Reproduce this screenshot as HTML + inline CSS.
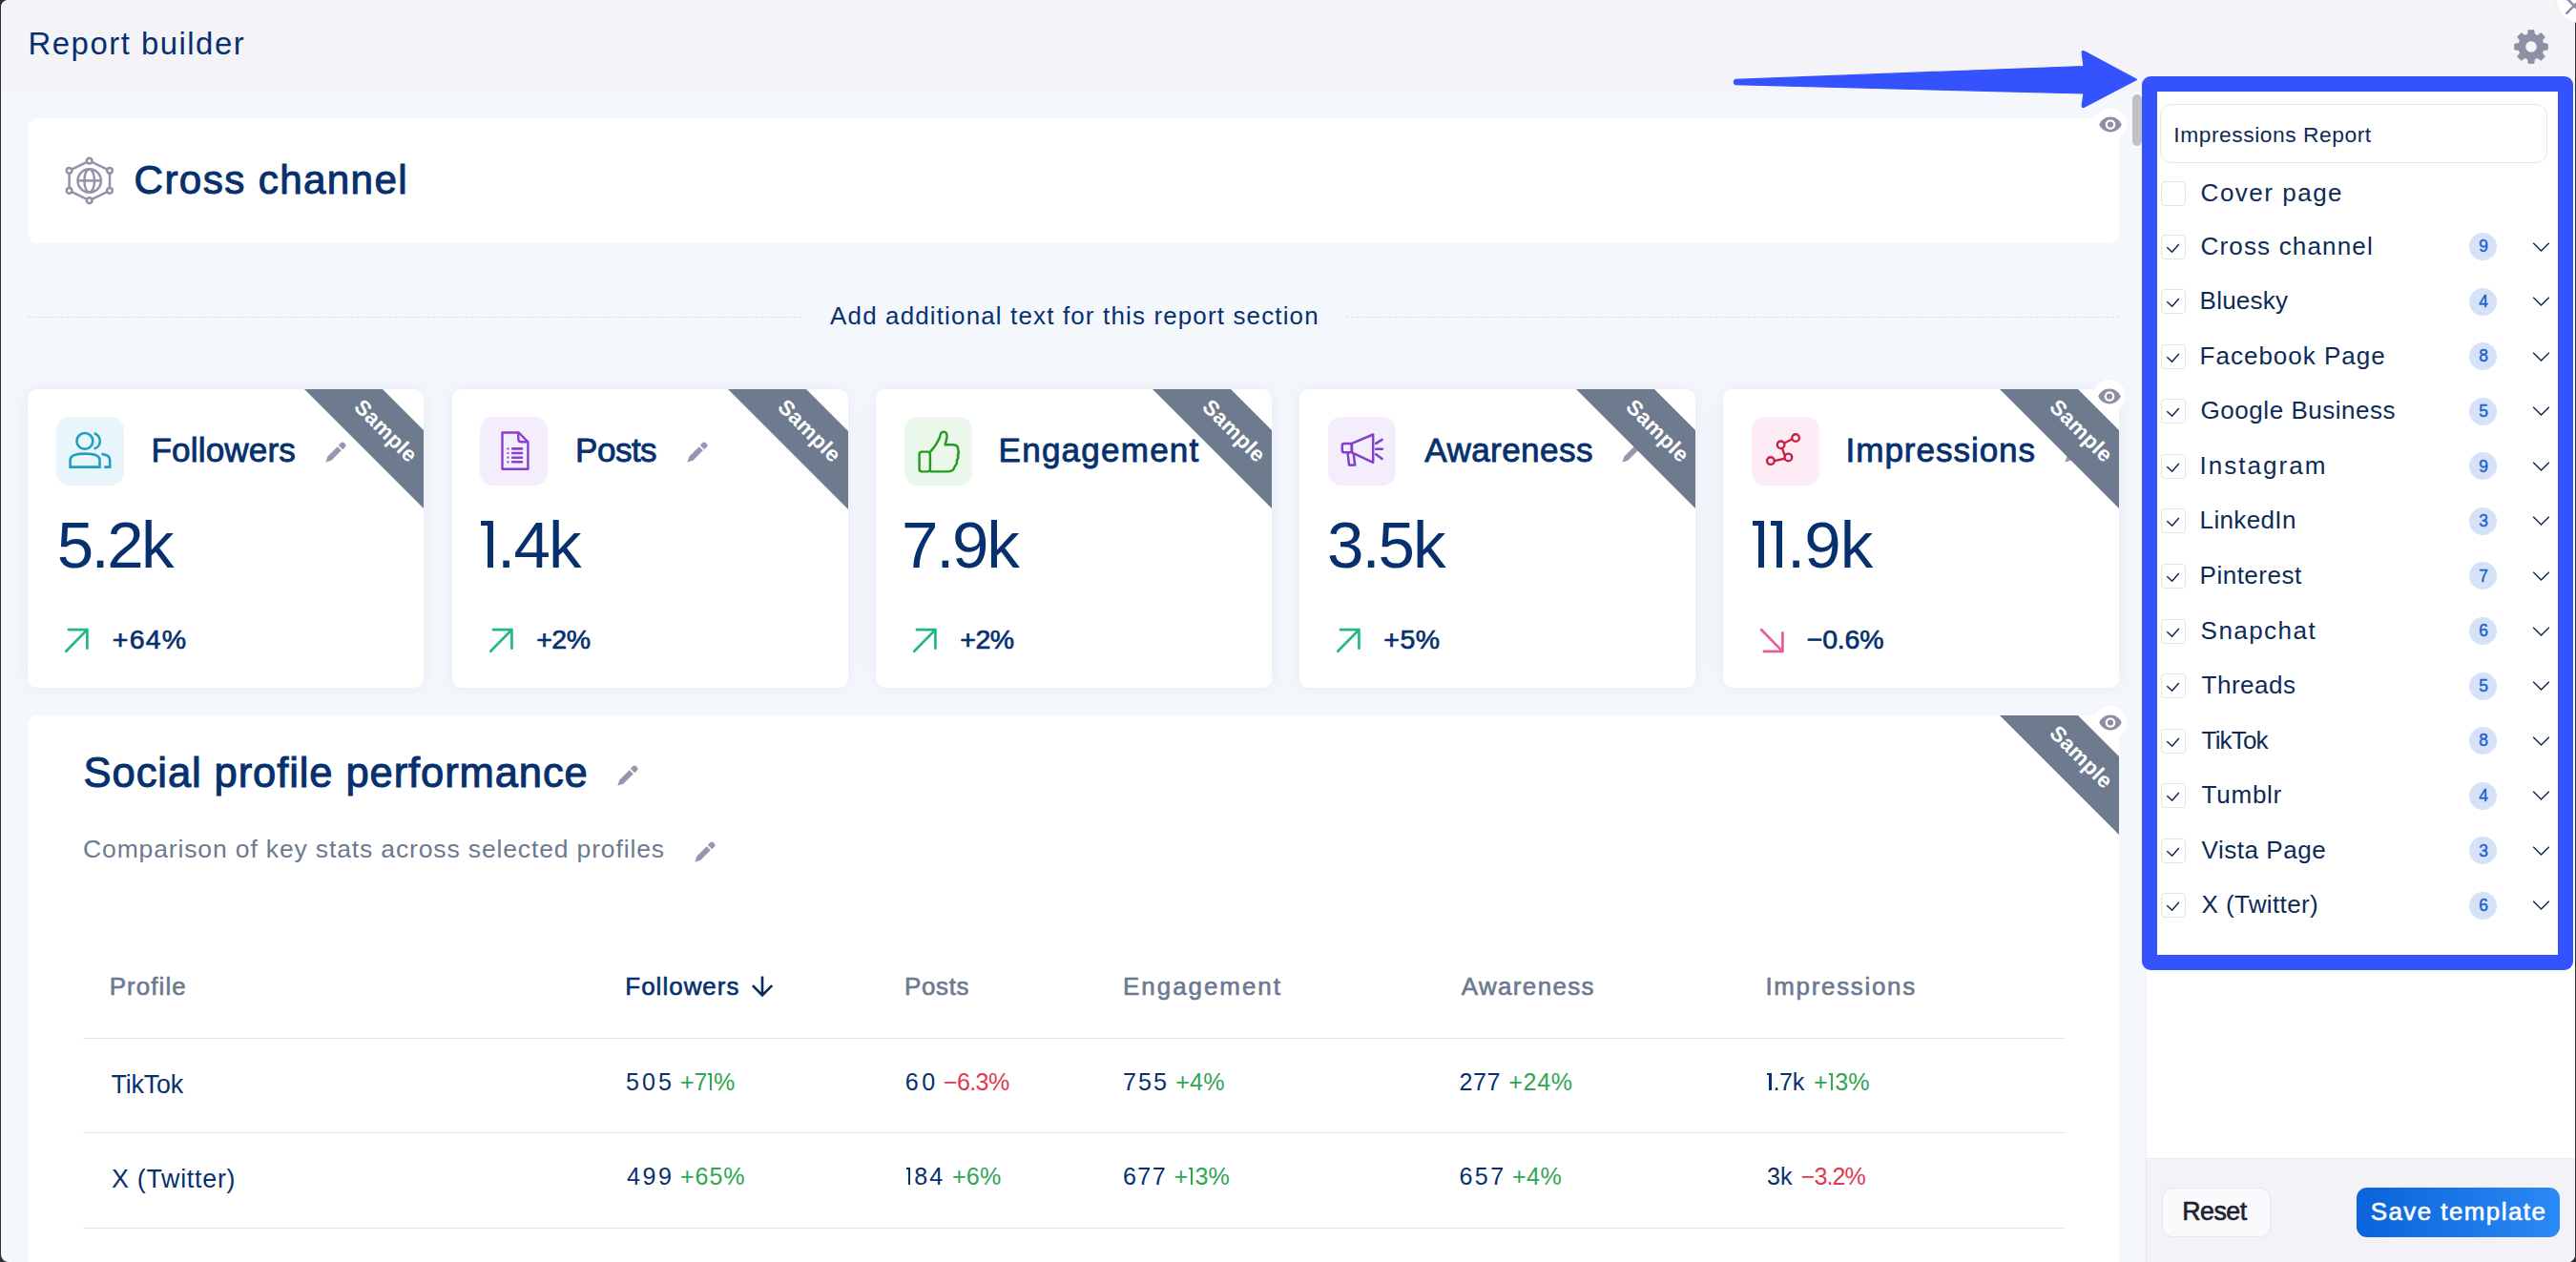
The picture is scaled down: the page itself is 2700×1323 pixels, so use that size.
<!DOCTYPE html>
<html><head><meta charset="utf-8"><title>Report builder</title><style>
html,body{margin:0;padding:0}
body{width:2700px;height:1323px;overflow:hidden;position:relative;background:#2e3136;font-family:'Liberation Sans', sans-serif}
</style></head><body>
<div style="position:absolute;left:1px;top:0;width:2698px;height:1323px;border-radius:8px;background:#f4f7fc;overflow:hidden"><div style="position:absolute;left:0;top:0;width:2698px;height:95px;background:#f4f3f8"></div></div>
<svg style="position:absolute;left:2635px;top:31px" width="36" height="36" viewBox="0 0 36 36"><path fill="#8e90a5" fill-rule="evenodd" stroke="#8e90a5" stroke-width="0.6" stroke-linejoin="round" d="M14.30 5.12L15.10 0.44L20.90 0.44L21.70 5.12A13.4 13.4 0 0 1 24.49 6.28L28.37 3.53L32.47 7.63L29.72 11.51A13.4 13.4 0 0 1 30.88 14.30L35.56 15.10L35.56 20.90L30.88 21.70A13.4 13.4 0 0 1 29.72 24.49L32.47 28.37L28.37 32.47L24.49 29.72A13.4 13.4 0 0 1 21.70 30.88L20.90 35.56L15.10 35.56L14.30 30.88A13.4 13.4 0 0 1 11.51 29.72L7.63 32.47L3.53 28.37L6.28 24.49A13.4 13.4 0 0 1 5.12 21.70L0.44 20.90L0.44 15.10L5.12 14.30A13.4 13.4 0 0 1 6.28 11.51L3.53 7.63L7.63 3.53L11.51 6.28A13.4 13.4 0 0 1 14.30 5.12ZM24.1 18A6.1 6.1 0 1 0 11.9 18A6.1 6.1 0 1 0 24.1 18Z"/></svg>
<div style="position:absolute;left:2680px;top:-24px;width:48px;height:48px;border-radius:50%;background:#fff;box-shadow:0 0 5px rgba(0,0,0,0.05)"></div>
<svg style="position:absolute;left:2686px;top:-6px" width="24" height="24" viewBox="0 0 24 24"><path d="M4.2 19.8L19.8 4.2M4.2 4.2L19.8 19.8" stroke="#8e8ea8" stroke-width="2.6" stroke-linecap="round"/></svg>
<div style="position:absolute;left:2699px;top:24px;width:1px;height:1299px;background:#2e3136"></div>
<div style="position:absolute;left:29px;top:124px;width:2192px;height:131px;background:#fff;border-radius:12px"></div>
<svg style="position:absolute;left:66px;top:162px" width="56" height="56" viewBox="0 0 56 56"><g fill="none" stroke="#9393a8" stroke-width="2.5">
<path d="M27.7 6.6 L6.6 16.8 M27.7 6.6 L49 16.8 M6.6 16.8 V37.8 M49 16.8 V37.8 M6.6 37.8 L27.7 48.2 M49 37.8 L27.7 48.2" />
<circle cx="27.7" cy="6.6" r="2.9" fill="#fff"/><circle cx="6.6" cy="16.8" r="2.9" fill="#fff"/><circle cx="49" cy="16.8" r="2.9" fill="#fff"/>
<circle cx="6.6" cy="37.8" r="2.9" fill="#fff"/><circle cx="49" cy="37.8" r="2.9" fill="#fff"/><circle cx="27.7" cy="48.2" r="2.9" fill="#fff"/>
<circle cx="27.7" cy="27.4" r="12.2"/><ellipse cx="27.7" cy="27.4" rx="5.3" ry="12.2"/><path d="M15.5 27.4 H39.9"/></g></svg>
<div style="position:absolute;left:2195px;top:113px;width:34px;height:34px;border-radius:50%;background:#fff"></div>
<svg style="position:absolute;left:2200px;top:121.5px" width="24" height="17" viewBox="0 0 24 17"><path d="M12 0.6C6.6 0.6 2.2 4 0.3 8.5 2.2 13 6.6 16.4 12 16.4S21.8 13 23.7 8.5C21.8 4 17.4 0.6 12 0.6Z" fill="#8e8ea2"/><circle cx="12" cy="8.5" r="5.3" fill="#fff"/><circle cx="12" cy="8.5" r="3.1" fill="#8e8ea2"/></svg>
<div style="position:absolute;left:29px;top:331.5px;width:811px;height:0;border-top:1.5px dashed #dde1e9"></div>
<div style="position:absolute;left:1411px;top:331.5px;width:810px;height:0;border-top:1.5px dashed #dde1e9"></div>
<div style="position:absolute;left:29px;top:408px;width:415px;height:313px;background:#fff;border-radius:10px;box-shadow:0 0 20px rgba(30,50,100,0.06)"></div>
<div style="position:absolute;left:58.5px;top:437px;width:71px;height:71.5px;background:#e8f6fb;border-radius:14px"></div>
<svg style="position:absolute;left:58.5px;top:437px" width="71" height="71" viewBox="0 0 71 71"><g fill="none" stroke="#1f9fc0" stroke-width="2.6"><circle cx="29.9" cy="25.4" r="8.4"/><path d="M39.6 17.3 A8.4 8.4 0 0 1 39.6 33.5"/><path d="M14.6 52.6 V45.3 Q14.6 38.6 30 38.6 Q45.5 38.6 45.5 45.3 V52.6 Z"/><path d="M47.5 38.9 Q56.2 40 56.2 45.2 V52.6 H50.3"/></g></svg>
<svg style="position:absolute;left:67px;top:658px" width="27" height="27" viewBox="0 0 27 27"><path d="M2.2 24.8 L24.4 2.1 M4.9 2.1 H24.4 V21.7" fill="none" stroke="#1fba83" stroke-width="2.7" stroke-linecap="round" stroke-linejoin="miter"/></svg>
<div style="position:absolute;left:473.5px;top:408px;width:415px;height:313px;background:#fff;border-radius:10px;box-shadow:0 0 20px rgba(30,50,100,0.06)"></div>
<div style="position:absolute;left:503.0px;top:437px;width:71px;height:71.5px;background:#f3edfc;border-radius:14px"></div>
<svg style="position:absolute;left:503.0px;top:437px" width="71" height="71" viewBox="0 0 71 71"><g fill="none" stroke="#8a3fd0" stroke-width="2.4" stroke-linejoin="round"><path d="M23.5 16.5 H40.8 L50.4 26.3 V54.8 H23.5 Z"/><path d="M40.3 16.8 V23.3 Q40.3 26.3 43.3 26.3 H50.2"/><path d="M34.2 33.4 H44 M34.2 38 H44 M34.2 42.7 H44 M34.2 47.3 H44" stroke-width="2.6" stroke-linecap="round"/><path d="M29.4 33.4 h.1 M29.4 38 h.1 M29.4 42.7 h.1 M29.4 47.3 h.1" stroke-width="2.2" stroke-linecap="round"/></g></svg>
<svg style="position:absolute;left:511.5px;top:658px" width="27" height="27" viewBox="0 0 27 27"><path d="M2.2 24.8 L24.4 2.1 M4.9 2.1 H24.4 V21.7" fill="none" stroke="#1fba83" stroke-width="2.7" stroke-linecap="round" stroke-linejoin="miter"/></svg>
<div style="position:absolute;left:918px;top:408px;width:415px;height:313px;background:#fff;border-radius:10px;box-shadow:0 0 20px rgba(30,50,100,0.06)"></div>
<div style="position:absolute;left:947.5px;top:437px;width:71px;height:71.5px;background:#eaf7ea;border-radius:14px"></div>
<svg style="position:absolute;left:947.5px;top:437px" width="71" height="71" viewBox="0 0 71 71"><g fill="none" stroke="#239b22" stroke-width="2.4" stroke-linejoin="round"><rect x="15.6" y="36.6" width="11.3" height="20.8" rx="2.6"/><path d="M26.9 36.8 Q33.3 30.2 37 21.5 Q37.8 15.8 40.7 15.6 Q44.8 15.6 44.6 21.3 L42.6 29.3 H51.6 Q56.6 29.8 56.2 34.8 Q57.6 37.6 55.8 40.2 Q57.1 43.2 54.8 45.8 Q55.6 49.3 52.9 51.6 Q51.6 57.4 46 57.4 H26.9"/></g></svg>
<svg style="position:absolute;left:956px;top:658px" width="27" height="27" viewBox="0 0 27 27"><path d="M2.2 24.8 L24.4 2.1 M4.9 2.1 H24.4 V21.7" fill="none" stroke="#1fba83" stroke-width="2.7" stroke-linecap="round" stroke-linejoin="miter"/></svg>
<div style="position:absolute;left:1362px;top:408px;width:415px;height:313px;background:#fff;border-radius:10px;box-shadow:0 0 20px rgba(30,50,100,0.06)"></div>
<div style="position:absolute;left:1391.5px;top:437px;width:71px;height:71.5px;background:#f3edfc;border-radius:14px"></div>
<svg style="position:absolute;left:1391.5px;top:437px" width="71" height="71" viewBox="0 0 71 71"><g fill="none" stroke="#8140cc" stroke-width="2.5" stroke-linejoin="round"><path d="M24.9 27.9 L47.2 18.5 V47.8 L24.9 37.3 Z"/><rect x="14.8" y="27.9" width="10.1" height="9.4" rx="2"/><path d="M20.6 37.3 L22 50.6 H28.2 L26.6 37.8"/><path d="M50.2 27.9 L56.6 23.9 M50.2 33.8 H56.9 M50.2 39.2 L56.6 43.9" stroke-linecap="round"/></g></svg>
<svg style="position:absolute;left:1400px;top:658px" width="27" height="27" viewBox="0 0 27 27"><path d="M2.2 24.8 L24.4 2.1 M4.9 2.1 H24.4 V21.7" fill="none" stroke="#1fba83" stroke-width="2.7" stroke-linecap="round" stroke-linejoin="miter"/></svg>
<div style="position:absolute;left:1806px;top:408px;width:415px;height:313px;background:#fff;border-radius:10px;box-shadow:0 0 20px rgba(30,50,100,0.06)"></div>
<div style="position:absolute;left:1835.5px;top:437px;width:71px;height:71.5px;background:#fdebf6;border-radius:14px"></div>
<svg style="position:absolute;left:1835.5px;top:437px" width="71" height="71" viewBox="0 0 71 71"><g fill="none" stroke="#c42443" stroke-width="2.4"><path d="M23.9 46.1 L35.8 43.5 L30.7 29.3 L45.1 22"/><circle cx="19.9" cy="46.1" r="3.8" fill="#fdebf6"/><circle cx="38.4" cy="42.4" r="3.8" fill="#fdebf6"/><circle cx="30.6" cy="29.3" r="3.8" fill="#fdebf6"/><circle cx="46.1" cy="22" r="3.8" fill="#fdebf6"/></g></svg>
<svg style="position:absolute;left:1844px;top:658px" width="27" height="27" viewBox="0 0 27 27"><path d="M2.2 2.2 L24.4 24.9 M24.4 5.3 V24.9 H4.9" fill="none" stroke="#ea5b9d" stroke-width="2.7" stroke-linecap="round" stroke-linejoin="miter"/></svg>
<div style="position:absolute;left:29px;top:750px;width:2192px;height:600px;background:#fff;border-radius:10px"></div>
<div style="position:absolute;left:646.5px;top:801.5px;width:22px;height:22px"><svg width="22" height="22" viewBox="0 0 22 22"><g fill="#9896ae"><path d="M0.4 21.7 L2.4 15.4 L12.7 5.2 L16.8 9.3 L6.6 19.6 Z"/><path d="M13.8 3.8 L16.3 1.3 Q18 -0.3 19.7 1.3 L20.8 2.4 Q22.4 4.1 20.8 5.7 L18.2 8.2 Z"/></g></svg></div>
<div style="position:absolute;left:727.5px;top:881.5px;width:22px;height:22px"><svg width="22" height="22" viewBox="0 0 22 22"><g fill="#9896ae"><path d="M0.4 21.7 L2.4 15.4 L12.7 5.2 L16.8 9.3 L6.6 19.6 Z"/><path d="M13.8 3.8 L16.3 1.3 Q18 -0.3 19.7 1.3 L20.8 2.4 Q22.4 4.1 20.8 5.7 L18.2 8.2 Z"/></g></svg></div>
<svg style="position:absolute;left:780px;top:1018px" width="40" height="32" viewBox="0 0 40 32"><path d="M19 5.4 V25 M8.9 15.2 L19 25.3 L29.2 15.2" fill="none" stroke="#0a2a58" stroke-width="2.6" stroke-linecap="butt" stroke-linejoin="miter"/></svg>
<div style="position:absolute;left:87px;top:1087.5px;width:2077px;height:1.2px;background:#e2e4ea"></div>
<div style="position:absolute;left:87px;top:1187px;width:2077px;height:1.2px;background:#e2e4ea"></div>
<div style="position:absolute;left:87px;top:1286.5px;width:2077px;height:1.2px;background:#e2e4ea"></div>
<div style="position:absolute;left:2249px;top:95px;width:450px;height:1228px;background:#fff;border-left:1px solid #f0f0f4;box-sizing:border-box;border-bottom-right-radius:8px"></div>
<div style="position:absolute;left:2249px;top:1214px;width:450px;height:109px;background:#f3f3f7;border-top:1px solid #e9e9ef;border-left:1px solid #e6e6ec;box-sizing:border-box;border-bottom-right-radius:8px"></div>
<div style="position:absolute;left:2235px;top:99px;width:9.5px;height:54px;border-radius:5px;background:#c1c1c6"></div>
<div style="position:absolute;left:2264px;top:109px;width:406px;height:62px;box-sizing:border-box;border:1px solid #e6e6eb;border-radius:12px;background:#fff"></div>
<div style="position:absolute;left:2264.5px;top:190.20px;width:26px;height:26px;box-sizing:border-box;border:1px solid #e3e3e8;border-radius:4px;background:#fff"></div>
<div style="position:absolute;left:2264.5px;top:245.50px;width:26px;height:26px;box-sizing:border-box;border:1px solid #e3e3e8;border-radius:4px;background:#fff"></div>
<svg style="position:absolute;left:2270px;top:250.50px" width="16" height="16" viewBox="0 0 16 16"><path d="M1.3 8.3 L6.6 13.2 L13.8 4.9" fill="none" stroke="#13284c" stroke-width="1.5"/></svg>
<div style="position:absolute;left:2588px;top:244.00px;width:29px;height:29px;border-radius:50%;background:#d6e2f8"></div>
<svg style="position:absolute;left:2654px;top:252.50px" width="19" height="12" viewBox="0 0 19 12"><path d="M1.2 1.8 L9.5 10 L17.8 1.8" fill="none" stroke="#15284a" stroke-width="1.45"/></svg>
<div style="position:absolute;left:2264.5px;top:303.08px;width:26px;height:26px;box-sizing:border-box;border:1px solid #e3e3e8;border-radius:4px;background:#fff"></div>
<svg style="position:absolute;left:2270px;top:308.08px" width="16" height="16" viewBox="0 0 16 16"><path d="M1.3 8.3 L6.6 13.2 L13.8 4.9" fill="none" stroke="#13284c" stroke-width="1.5"/></svg>
<div style="position:absolute;left:2588px;top:301.58px;width:29px;height:29px;border-radius:50%;background:#d6e2f8"></div>
<svg style="position:absolute;left:2654px;top:310.08px" width="19" height="12" viewBox="0 0 19 12"><path d="M1.2 1.8 L9.5 10 L17.8 1.8" fill="none" stroke="#15284a" stroke-width="1.45"/></svg>
<div style="position:absolute;left:2264.5px;top:360.66px;width:26px;height:26px;box-sizing:border-box;border:1px solid #e3e3e8;border-radius:4px;background:#fff"></div>
<svg style="position:absolute;left:2270px;top:365.66px" width="16" height="16" viewBox="0 0 16 16"><path d="M1.3 8.3 L6.6 13.2 L13.8 4.9" fill="none" stroke="#13284c" stroke-width="1.5"/></svg>
<div style="position:absolute;left:2588px;top:359.16px;width:29px;height:29px;border-radius:50%;background:#d6e2f8"></div>
<svg style="position:absolute;left:2654px;top:367.66px" width="19" height="12" viewBox="0 0 19 12"><path d="M1.2 1.8 L9.5 10 L17.8 1.8" fill="none" stroke="#15284a" stroke-width="1.45"/></svg>
<div style="position:absolute;left:2264.5px;top:418.24px;width:26px;height:26px;box-sizing:border-box;border:1px solid #e3e3e8;border-radius:4px;background:#fff"></div>
<svg style="position:absolute;left:2270px;top:423.24px" width="16" height="16" viewBox="0 0 16 16"><path d="M1.3 8.3 L6.6 13.2 L13.8 4.9" fill="none" stroke="#13284c" stroke-width="1.5"/></svg>
<div style="position:absolute;left:2588px;top:416.74px;width:29px;height:29px;border-radius:50%;background:#d6e2f8"></div>
<svg style="position:absolute;left:2654px;top:425.24px" width="19" height="12" viewBox="0 0 19 12"><path d="M1.2 1.8 L9.5 10 L17.8 1.8" fill="none" stroke="#15284a" stroke-width="1.45"/></svg>
<div style="position:absolute;left:2264.5px;top:475.82px;width:26px;height:26px;box-sizing:border-box;border:1px solid #e3e3e8;border-radius:4px;background:#fff"></div>
<svg style="position:absolute;left:2270px;top:480.82px" width="16" height="16" viewBox="0 0 16 16"><path d="M1.3 8.3 L6.6 13.2 L13.8 4.9" fill="none" stroke="#13284c" stroke-width="1.5"/></svg>
<div style="position:absolute;left:2588px;top:474.32px;width:29px;height:29px;border-radius:50%;background:#d6e2f8"></div>
<svg style="position:absolute;left:2654px;top:482.82px" width="19" height="12" viewBox="0 0 19 12"><path d="M1.2 1.8 L9.5 10 L17.8 1.8" fill="none" stroke="#15284a" stroke-width="1.45"/></svg>
<div style="position:absolute;left:2264.5px;top:533.40px;width:26px;height:26px;box-sizing:border-box;border:1px solid #e3e3e8;border-radius:4px;background:#fff"></div>
<svg style="position:absolute;left:2270px;top:538.40px" width="16" height="16" viewBox="0 0 16 16"><path d="M1.3 8.3 L6.6 13.2 L13.8 4.9" fill="none" stroke="#13284c" stroke-width="1.5"/></svg>
<div style="position:absolute;left:2588px;top:531.90px;width:29px;height:29px;border-radius:50%;background:#d6e2f8"></div>
<svg style="position:absolute;left:2654px;top:540.40px" width="19" height="12" viewBox="0 0 19 12"><path d="M1.2 1.8 L9.5 10 L17.8 1.8" fill="none" stroke="#15284a" stroke-width="1.45"/></svg>
<div style="position:absolute;left:2264.5px;top:590.98px;width:26px;height:26px;box-sizing:border-box;border:1px solid #e3e3e8;border-radius:4px;background:#fff"></div>
<svg style="position:absolute;left:2270px;top:595.98px" width="16" height="16" viewBox="0 0 16 16"><path d="M1.3 8.3 L6.6 13.2 L13.8 4.9" fill="none" stroke="#13284c" stroke-width="1.5"/></svg>
<div style="position:absolute;left:2588px;top:589.48px;width:29px;height:29px;border-radius:50%;background:#d6e2f8"></div>
<svg style="position:absolute;left:2654px;top:597.98px" width="19" height="12" viewBox="0 0 19 12"><path d="M1.2 1.8 L9.5 10 L17.8 1.8" fill="none" stroke="#15284a" stroke-width="1.45"/></svg>
<div style="position:absolute;left:2264.5px;top:648.56px;width:26px;height:26px;box-sizing:border-box;border:1px solid #e3e3e8;border-radius:4px;background:#fff"></div>
<svg style="position:absolute;left:2270px;top:653.56px" width="16" height="16" viewBox="0 0 16 16"><path d="M1.3 8.3 L6.6 13.2 L13.8 4.9" fill="none" stroke="#13284c" stroke-width="1.5"/></svg>
<div style="position:absolute;left:2588px;top:647.06px;width:29px;height:29px;border-radius:50%;background:#d6e2f8"></div>
<svg style="position:absolute;left:2654px;top:655.56px" width="19" height="12" viewBox="0 0 19 12"><path d="M1.2 1.8 L9.5 10 L17.8 1.8" fill="none" stroke="#15284a" stroke-width="1.45"/></svg>
<div style="position:absolute;left:2264.5px;top:706.14px;width:26px;height:26px;box-sizing:border-box;border:1px solid #e3e3e8;border-radius:4px;background:#fff"></div>
<svg style="position:absolute;left:2270px;top:711.14px" width="16" height="16" viewBox="0 0 16 16"><path d="M1.3 8.3 L6.6 13.2 L13.8 4.9" fill="none" stroke="#13284c" stroke-width="1.5"/></svg>
<div style="position:absolute;left:2588px;top:704.64px;width:29px;height:29px;border-radius:50%;background:#d6e2f8"></div>
<svg style="position:absolute;left:2654px;top:713.14px" width="19" height="12" viewBox="0 0 19 12"><path d="M1.2 1.8 L9.5 10 L17.8 1.8" fill="none" stroke="#15284a" stroke-width="1.45"/></svg>
<div style="position:absolute;left:2264.5px;top:763.72px;width:26px;height:26px;box-sizing:border-box;border:1px solid #e3e3e8;border-radius:4px;background:#fff"></div>
<svg style="position:absolute;left:2270px;top:768.72px" width="16" height="16" viewBox="0 0 16 16"><path d="M1.3 8.3 L6.6 13.2 L13.8 4.9" fill="none" stroke="#13284c" stroke-width="1.5"/></svg>
<div style="position:absolute;left:2588px;top:762.22px;width:29px;height:29px;border-radius:50%;background:#d6e2f8"></div>
<svg style="position:absolute;left:2654px;top:770.72px" width="19" height="12" viewBox="0 0 19 12"><path d="M1.2 1.8 L9.5 10 L17.8 1.8" fill="none" stroke="#15284a" stroke-width="1.45"/></svg>
<div style="position:absolute;left:2264.5px;top:821.30px;width:26px;height:26px;box-sizing:border-box;border:1px solid #e3e3e8;border-radius:4px;background:#fff"></div>
<svg style="position:absolute;left:2270px;top:826.30px" width="16" height="16" viewBox="0 0 16 16"><path d="M1.3 8.3 L6.6 13.2 L13.8 4.9" fill="none" stroke="#13284c" stroke-width="1.5"/></svg>
<div style="position:absolute;left:2588px;top:819.80px;width:29px;height:29px;border-radius:50%;background:#d6e2f8"></div>
<svg style="position:absolute;left:2654px;top:828.30px" width="19" height="12" viewBox="0 0 19 12"><path d="M1.2 1.8 L9.5 10 L17.8 1.8" fill="none" stroke="#15284a" stroke-width="1.45"/></svg>
<div style="position:absolute;left:2264.5px;top:878.88px;width:26px;height:26px;box-sizing:border-box;border:1px solid #e3e3e8;border-radius:4px;background:#fff"></div>
<svg style="position:absolute;left:2270px;top:883.88px" width="16" height="16" viewBox="0 0 16 16"><path d="M1.3 8.3 L6.6 13.2 L13.8 4.9" fill="none" stroke="#13284c" stroke-width="1.5"/></svg>
<div style="position:absolute;left:2588px;top:877.38px;width:29px;height:29px;border-radius:50%;background:#d6e2f8"></div>
<svg style="position:absolute;left:2654px;top:885.88px" width="19" height="12" viewBox="0 0 19 12"><path d="M1.2 1.8 L9.5 10 L17.8 1.8" fill="none" stroke="#15284a" stroke-width="1.45"/></svg>
<div style="position:absolute;left:2264.5px;top:936.46px;width:26px;height:26px;box-sizing:border-box;border:1px solid #e3e3e8;border-radius:4px;background:#fff"></div>
<svg style="position:absolute;left:2270px;top:941.46px" width="16" height="16" viewBox="0 0 16 16"><path d="M1.3 8.3 L6.6 13.2 L13.8 4.9" fill="none" stroke="#13284c" stroke-width="1.5"/></svg>
<div style="position:absolute;left:2588px;top:934.96px;width:29px;height:29px;border-radius:50%;background:#d6e2f8"></div>
<svg style="position:absolute;left:2654px;top:943.46px" width="19" height="12" viewBox="0 0 19 12"><path d="M1.2 1.8 L9.5 10 L17.8 1.8" fill="none" stroke="#15284a" stroke-width="1.45"/></svg>
<div style="position:absolute;left:2265.5px;top:1245px;width:114px;height:52px;box-sizing:border-box;border:1px solid #e6e6ec;border-radius:11px;background:#fafafc"></div>
<div style="position:absolute;left:2470px;top:1245px;width:213px;height:51.5px;border-radius:11px;background:linear-gradient(90deg,#0b62d9,#2a8af6)"></div>
<div style="position:absolute;left:29.60px;top:27.00px;font:normal 32.87px/37.8px 'Liberation Sans', sans-serif;letter-spacing:1.511px;color:#06306e;white-space:pre">Report builder</div>
<div style="position:absolute;left:140.60px;top:165.00px;font:normal 42.19px/48.52px 'Liberation Sans', sans-serif;letter-spacing:1.366px;color:#06306e;white-space:pre;-webkit-text-stroke:1.01px #06306e">Cross channel</div>
<div style="position:absolute;left:870.10px;top:317.00px;font:normal 25.91px/29.8px 'Liberation Sans', sans-serif;letter-spacing:1.173px;color:#06306e;white-space:pre">Add additional text for this report section</div>
<div style="position:absolute;left:158.52px;top:452.00px;font:normal 35.09px/40.35px 'Liberation Sans', sans-serif;letter-spacing:0.151px;color:#06306e;white-space:pre;-webkit-text-stroke:0.84px #06306e">Followers</div>
<div style="position:absolute;left:59.80px;top:532.00px;font:normal 69.12px/79.49px 'Liberation Sans', sans-serif;letter-spacing:-2.624px;color:#06306e;white-space:pre">5.2k</div>
<div style="position:absolute;left:117.74px;top:654.00px;font:normal 28.48px/32.75px 'Liberation Sans', sans-serif;letter-spacing:1.276px;color:#06306e;white-space:pre;-webkit-text-stroke:0.68px #06306e">+64%</div>
<div style="position:absolute;left:603.12px;top:452.00px;font:normal 35.09px/40.35px 'Liberation Sans', sans-serif;letter-spacing:-0.558px;color:#06306e;white-space:pre;-webkit-text-stroke:0.84px #06306e">Posts</div>
<div style="position:absolute;left:502.55px;top:532.00px;font:normal 69.12px/79.49px 'Liberation Sans', sans-serif;letter-spacing:-1.754px;color:#06306e;white-space:pre"><span style="display:inline-block;position:relative;width:20.17px;height:48.73px;margin-right:-1.754px"><span style="position:absolute;left:8.19px;top:0;width:6.09px;height:48.73px;background:#06306e"></span><span style="position:absolute;left:1.95px;top:0;width:12.33px;height:5.12px;background:#06306e"></span></span>.4k</div>
<div style="position:absolute;left:562.24px;top:654.00px;font:normal 28.48px/32.75px 'Liberation Sans', sans-serif;letter-spacing:-0.519px;color:#06306e;white-space:pre;-webkit-text-stroke:0.68px #06306e">+2%</div>
<div style="position:absolute;left:1046.62px;top:452.00px;font:normal 35.09px/40.35px 'Liberation Sans', sans-serif;letter-spacing:1.198px;color:#06306e;white-space:pre;-webkit-text-stroke:0.84px #06306e">Engagement</div>
<div style="position:absolute;left:945.00px;top:532.00px;font:normal 69.12px/79.49px 'Liberation Sans', sans-serif;letter-spacing:-2.291px;color:#06306e;white-space:pre">7.9k</div>
<div style="position:absolute;left:1006.34px;top:654.00px;font:normal 28.48px/32.75px 'Liberation Sans', sans-serif;letter-spacing:-0.569px;color:#06306e;white-space:pre;-webkit-text-stroke:0.68px #06306e">+2%</div>
<div style="position:absolute;left:1493.22px;top:452.00px;font:normal 35.09px/40.35px 'Liberation Sans', sans-serif;letter-spacing:0.414px;color:#06306e;white-space:pre;-webkit-text-stroke:0.84px #06306e">Awareness</div>
<div style="position:absolute;left:1391.10px;top:532.00px;font:normal 69.12px/79.49px 'Liberation Sans', sans-serif;letter-spacing:-2.057px;color:#06306e;white-space:pre">3.5k</div>
<div style="position:absolute;left:1450.34px;top:654.00px;font:normal 28.48px/32.75px 'Liberation Sans', sans-serif;letter-spacing:0.431px;color:#06306e;white-space:pre;-webkit-text-stroke:0.68px #06306e">+5%</div>
<div style="position:absolute;left:1934.52px;top:452.00px;font:normal 35.09px/40.35px 'Liberation Sans', sans-serif;letter-spacing:0.951px;color:#06306e;white-space:pre;-webkit-text-stroke:0.84px #06306e">Impressions</div>
<div style="position:absolute;left:1834.65px;top:532.00px;font:normal 69.12px/79.49px 'Liberation Sans', sans-serif;letter-spacing:-0.959px;color:#06306e;white-space:pre"><span style="display:inline-block;position:relative;width:20.17px;height:48.73px;margin-right:-0.959px"><span style="position:absolute;left:8.19px;top:0;width:6.09px;height:48.73px;background:#06306e"></span><span style="position:absolute;left:1.95px;top:0;width:12.33px;height:5.12px;background:#06306e"></span></span><span style="display:inline-block;position:relative;width:20.17px;height:48.73px;margin-right:-0.959px"><span style="position:absolute;left:8.19px;top:0;width:6.09px;height:48.73px;background:#06306e"></span><span style="position:absolute;left:1.95px;top:0;width:12.33px;height:5.12px;background:#06306e"></span></span>.9k</div>
<div style="position:absolute;left:1893.84px;top:654.00px;font:normal 28.48px/32.75px 'Liberation Sans', sans-serif;letter-spacing:-0.220px;color:#06306e;white-space:pre;-webkit-text-stroke:0.68px #06306e">−0.6%</div>
<div style="position:absolute;left:87.62px;top:785.00px;font:normal 43.53px/50.06px 'Liberation Sans', sans-serif;letter-spacing:0.906px;color:#06306e;white-space:pre;-webkit-text-stroke:1.04px #06306e">Social profile performance</div>
<div style="position:absolute;left:87.10px;top:875.00px;font:normal 26.5px/30.47px 'Liberation Sans', sans-serif;letter-spacing:0.860px;color:#6b7a90;white-space:pre">Comparison of key stats across selected profiles</div>
<div style="position:absolute;left:114.71px;top:1020.00px;font:normal 25.91px/29.8px 'Liberation Sans', sans-serif;letter-spacing:1.093px;color:#6b7a90;white-space:pre;-webkit-text-stroke:0.62px #6b7a90">Profile</div>
<div style="position:absolute;left:655.31px;top:1020.00px;font:normal 25.91px/29.8px 'Liberation Sans', sans-serif;letter-spacing:1.036px;color:#06306e;white-space:pre;-webkit-text-stroke:0.62px #06306e">Followers</div>
<div style="position:absolute;left:948.11px;top:1020.00px;font:normal 25.91px/29.8px 'Liberation Sans', sans-serif;letter-spacing:0.661px;color:#6b7a90;white-space:pre;-webkit-text-stroke:0.62px #6b7a90">Posts</div>
<div style="position:absolute;left:1177.06px;top:1020.00px;font:normal 25.91px/29.8px 'Liberation Sans', sans-serif;letter-spacing:1.996px;color:#6b7a90;white-space:pre;-webkit-text-stroke:0.62px #6b7a90">Engagement</div>
<div style="position:absolute;left:1531.71px;top:1020.00px;font:normal 25.91px/29.8px 'Liberation Sans', sans-serif;letter-spacing:1.394px;color:#6b7a90;white-space:pre;-webkit-text-stroke:0.62px #6b7a90">Awareness</div>
<div style="position:absolute;left:1850.41px;top:1020.00px;font:normal 25.91px/29.8px 'Liberation Sans', sans-serif;letter-spacing:1.708px;color:#6b7a90;white-space:pre;-webkit-text-stroke:0.62px #6b7a90">Impressions</div>
<div style="position:absolute;left:116.60px;top:1122.00px;font:normal 26.8px/30.82px 'Liberation Sans', sans-serif;letter-spacing:-0.185px;color:#06306e;white-space:pre">TikTok</div>
<div style="position:absolute;left:116.90px;top:1221.00px;font:normal 26.8px/30.82px 'Liberation Sans', sans-serif;letter-spacing:0.755px;color:#06306e;white-space:pre">X (Twitter)</div>
<div style="position:absolute;left:656.00px;top:1120.00px;font:normal 25.07px/28.83px 'Liberation Sans', sans-serif;letter-spacing:3.011px;color:#06306e;white-space:pre">505</div>
<div style="position:absolute;left:713.10px;top:1120.00px;font:normal 25.07px/28.83px 'Liberation Sans', sans-serif;letter-spacing:-0.331px;color:#2fa652;white-space:pre">+7<span style="display:inline-block;position:relative;width:7.32px;height:17.67px;margin-right:-0.331px"><span style="position:absolute;left:2.97px;top:0;width:2.21px;height:17.67px;background:#2fa652"></span><span style="position:absolute;left:0.71px;top:0;width:4.47px;height:1.86px;background:#2fa652"></span></span>%</div>
<div style="position:absolute;left:948.80px;top:1120.00px;font:normal 25.07px/28.83px 'Liberation Sans', sans-serif;letter-spacing:3.561px;color:#06306e;white-space:pre">60</div>
<div style="position:absolute;left:989.00px;top:1120.00px;font:normal 25.07px/28.83px 'Liberation Sans', sans-serif;letter-spacing:-0.644px;color:#df3a4f;white-space:pre">−6.3%</div>
<div style="position:absolute;left:1176.90px;top:1120.00px;font:normal 25.07px/28.83px 'Liberation Sans', sans-serif;letter-spacing:2.161px;color:#06306e;white-space:pre">755</div>
<div style="position:absolute;left:1232.20px;top:1120.00px;font:normal 25.07px/28.83px 'Liberation Sans', sans-serif;letter-spacing:0.213px;color:#2fa652;white-space:pre">+4%</div>
<div style="position:absolute;left:1529.50px;top:1120.00px;font:normal 25.07px/28.83px 'Liberation Sans', sans-serif;letter-spacing:0.611px;color:#06306e;white-space:pre">277</div>
<div style="position:absolute;left:1581.30px;top:1120.00px;font:normal 25.07px/28.83px 'Liberation Sans', sans-serif;letter-spacing:0.629px;color:#2fa652;white-space:pre">+24%</div>
<div style="position:absolute;left:1851.39px;top:1120.00px;font:normal 25.07px/28.83px 'Liberation Sans', sans-serif;letter-spacing:-0.271px;color:#06306e;white-space:pre"><span style="display:inline-block;position:relative;width:7.32px;height:17.67px;margin-right:-0.271px"><span style="position:absolute;left:2.97px;top:0;width:2.21px;height:17.67px;background:#06306e"></span><span style="position:absolute;left:0.71px;top:0;width:4.47px;height:1.86px;background:#06306e"></span></span>.7k</div>
<div style="position:absolute;left:1901.10px;top:1120.00px;font:normal 25.07px/28.83px 'Liberation Sans', sans-serif;letter-spacing:0.103px;color:#2fa652;white-space:pre">+<span style="display:inline-block;position:relative;width:7.32px;height:17.67px;margin-right:0.103px"><span style="position:absolute;left:2.97px;top:0;width:2.21px;height:17.67px;background:#2fa652"></span><span style="position:absolute;left:0.71px;top:0;width:4.47px;height:1.86px;background:#2fa652"></span></span>3%</div>
<div style="position:absolute;left:657.00px;top:1219.00px;font:normal 25.07px/28.83px 'Liberation Sans', sans-serif;letter-spacing:2.511px;color:#06306e;white-space:pre">499</div>
<div style="position:absolute;left:713.10px;top:1219.00px;font:normal 25.07px/28.83px 'Liberation Sans', sans-serif;letter-spacing:0.862px;color:#2fa652;white-space:pre">+65%</div>
<div style="position:absolute;left:949.09px;top:1219.00px;font:normal 25.07px/28.83px 'Liberation Sans', sans-serif;letter-spacing:1.926px;color:#06306e;white-space:pre"><span style="display:inline-block;position:relative;width:7.32px;height:17.67px;margin-right:1.926px"><span style="position:absolute;left:2.97px;top:0;width:2.21px;height:17.67px;background:#06306e"></span><span style="position:absolute;left:0.71px;top:0;width:4.47px;height:1.86px;background:#06306e"></span></span>84</div>
<div style="position:absolute;left:997.90px;top:1219.00px;font:normal 25.07px/28.83px 'Liberation Sans', sans-serif;letter-spacing:0.213px;color:#2fa652;white-space:pre">+6%</div>
<div style="position:absolute;left:1176.90px;top:1219.00px;font:normal 25.07px/28.83px 'Liberation Sans', sans-serif;letter-spacing:1.461px;color:#06306e;white-space:pre">677</div>
<div style="position:absolute;left:1230.40px;top:1219.00px;font:normal 25.07px/28.83px 'Liberation Sans', sans-serif;letter-spacing:0.103px;color:#2fa652;white-space:pre">+<span style="display:inline-block;position:relative;width:7.32px;height:17.67px;margin-right:0.103px"><span style="position:absolute;left:2.97px;top:0;width:2.21px;height:17.67px;background:#2fa652"></span><span style="position:absolute;left:0.71px;top:0;width:4.47px;height:1.86px;background:#2fa652"></span></span>3%</div>
<div style="position:absolute;left:1529.50px;top:1219.00px;font:normal 25.07px/28.83px 'Liberation Sans', sans-serif;letter-spacing:2.411px;color:#06306e;white-space:pre">657</div>
<div style="position:absolute;left:1584.90px;top:1219.00px;font:normal 25.07px/28.83px 'Liberation Sans', sans-serif;letter-spacing:0.463px;color:#2fa652;white-space:pre">+4%</div>
<div style="position:absolute;left:1852.10px;top:1219.00px;font:normal 25.07px/28.83px 'Liberation Sans', sans-serif;letter-spacing:-0.139px;color:#06306e;white-space:pre">3k</div>
<div style="position:absolute;left:1887.80px;top:1219.00px;font:normal 25.07px/28.83px 'Liberation Sans', sans-serif;letter-spacing:-0.969px;color:#df3a4f;white-space:pre">−3.2%</div>
<div style="position:absolute;left:2278.30px;top:128.00px;font:normal 22.8px/26.22px 'Liberation Sans', sans-serif;letter-spacing:0.540px;color:#0d2b56;white-space:pre">Impressions Report</div>
<div style="position:absolute;left:2306.60px;top:188.00px;font:normal 26.06px/29.97px 'Liberation Sans', sans-serif;letter-spacing:1.481px;color:#0d2b56;white-space:pre">Cover page</div>
<div style="position:absolute;left:2598.21px;top:248.00px;font:normal 17.47px/20.09px 'Liberation Sans', sans-serif;letter-spacing:0.000px;color:#1f5fcf;white-space:pre;-webkit-text-stroke:0.42px #1f5fcf">9</div>
<div style="position:absolute;left:2306.60px;top:244.00px;font:normal 26.06px/29.97px 'Liberation Sans', sans-serif;letter-spacing:1.133px;color:#0d2b56;white-space:pre">Cross channel</div>
<div style="position:absolute;left:2598.21px;top:306.00px;font:normal 17.47px/20.09px 'Liberation Sans', sans-serif;letter-spacing:0.000px;color:#1f5fcf;white-space:pre;-webkit-text-stroke:0.42px #1f5fcf">4</div>
<div style="position:absolute;left:2305.60px;top:301.00px;font:normal 26.06px/29.97px 'Liberation Sans', sans-serif;letter-spacing:0.187px;color:#0d2b56;white-space:pre">Bluesky</div>
<div style="position:absolute;left:2598.21px;top:363.00px;font:normal 17.47px/20.09px 'Liberation Sans', sans-serif;letter-spacing:0.000px;color:#1f5fcf;white-space:pre;-webkit-text-stroke:0.42px #1f5fcf">8</div>
<div style="position:absolute;left:2305.60px;top:359.00px;font:normal 26.06px/29.97px 'Liberation Sans', sans-serif;letter-spacing:0.969px;color:#0d2b56;white-space:pre">Facebook Page</div>
<div style="position:absolute;left:2598.21px;top:421.00px;font:normal 17.47px/20.09px 'Liberation Sans', sans-serif;letter-spacing:0.000px;color:#1f5fcf;white-space:pre;-webkit-text-stroke:0.42px #1f5fcf">5</div>
<div style="position:absolute;left:2306.60px;top:416.00px;font:normal 26.06px/29.97px 'Liberation Sans', sans-serif;letter-spacing:0.508px;color:#0d2b56;white-space:pre">Google Business</div>
<div style="position:absolute;left:2598.21px;top:479.00px;font:normal 17.47px/20.09px 'Liberation Sans', sans-serif;letter-spacing:0.000px;color:#1f5fcf;white-space:pre;-webkit-text-stroke:0.42px #1f5fcf">9</div>
<div style="position:absolute;left:2305.60px;top:474.00px;font:normal 26.06px/29.97px 'Liberation Sans', sans-serif;letter-spacing:2.011px;color:#0d2b56;white-space:pre">Instagram</div>
<div style="position:absolute;left:2598.21px;top:536.00px;font:normal 17.47px/20.09px 'Liberation Sans', sans-serif;letter-spacing:0.000px;color:#1f5fcf;white-space:pre;-webkit-text-stroke:0.42px #1f5fcf">3</div>
<div style="position:absolute;left:2305.60px;top:531.00px;font:normal 26.06px/29.97px 'Liberation Sans', sans-serif;letter-spacing:0.330px;color:#0d2b56;white-space:pre">LinkedIn</div>
<div style="position:absolute;left:2598.21px;top:594.00px;font:normal 17.47px/20.09px 'Liberation Sans', sans-serif;letter-spacing:0.000px;color:#1f5fcf;white-space:pre;-webkit-text-stroke:0.42px #1f5fcf">7</div>
<div style="position:absolute;left:2305.60px;top:589.00px;font:normal 26.06px/29.97px 'Liberation Sans', sans-serif;letter-spacing:0.469px;color:#0d2b56;white-space:pre">Pinterest</div>
<div style="position:absolute;left:2598.21px;top:651.00px;font:normal 17.47px/20.09px 'Liberation Sans', sans-serif;letter-spacing:0.000px;color:#1f5fcf;white-space:pre;-webkit-text-stroke:0.42px #1f5fcf">6</div>
<div style="position:absolute;left:2306.60px;top:647.00px;font:normal 26.06px/29.97px 'Liberation Sans', sans-serif;letter-spacing:1.425px;color:#0d2b56;white-space:pre">Snapchat</div>
<div style="position:absolute;left:2598.21px;top:709.00px;font:normal 17.47px/20.09px 'Liberation Sans', sans-serif;letter-spacing:0.000px;color:#1f5fcf;white-space:pre;-webkit-text-stroke:0.42px #1f5fcf">5</div>
<div style="position:absolute;left:2307.60px;top:704.00px;font:normal 26.06px/29.97px 'Liberation Sans', sans-serif;letter-spacing:0.462px;color:#0d2b56;white-space:pre">Threads</div>
<div style="position:absolute;left:2598.21px;top:766.00px;font:normal 17.47px/20.09px 'Liberation Sans', sans-serif;letter-spacing:0.000px;color:#1f5fcf;white-space:pre;-webkit-text-stroke:0.42px #1f5fcf">8</div>
<div style="position:absolute;left:2307.60px;top:762.00px;font:normal 26.06px/29.97px 'Liberation Sans', sans-serif;letter-spacing:-0.872px;color:#0d2b56;white-space:pre">TikTok</div>
<div style="position:absolute;left:2598.21px;top:824.00px;font:normal 17.47px/20.09px 'Liberation Sans', sans-serif;letter-spacing:0.000px;color:#1f5fcf;white-space:pre;-webkit-text-stroke:0.42px #1f5fcf">4</div>
<div style="position:absolute;left:2307.60px;top:819.00px;font:normal 26.06px/29.97px 'Liberation Sans', sans-serif;letter-spacing:0.720px;color:#0d2b56;white-space:pre">Tumblr</div>
<div style="position:absolute;left:2598.21px;top:882.00px;font:normal 17.47px/20.09px 'Liberation Sans', sans-serif;letter-spacing:0.000px;color:#1f5fcf;white-space:pre;-webkit-text-stroke:0.42px #1f5fcf">3</div>
<div style="position:absolute;left:2307.60px;top:877.00px;font:normal 26.06px/29.97px 'Liberation Sans', sans-serif;letter-spacing:0.509px;color:#0d2b56;white-space:pre">Vista Page</div>
<div style="position:absolute;left:2598.21px;top:939.00px;font:normal 17.47px/20.09px 'Liberation Sans', sans-serif;letter-spacing:0.000px;color:#1f5fcf;white-space:pre;-webkit-text-stroke:0.42px #1f5fcf">6</div>
<div style="position:absolute;left:2307.60px;top:934.00px;font:normal 26.06px/29.97px 'Liberation Sans', sans-serif;letter-spacing:0.341px;color:#0d2b56;white-space:pre">X (Twitter)</div>
<div style="position:absolute;left:2287.32px;top:1255.00px;font:normal 26.8px/30.82px 'Liberation Sans', sans-serif;letter-spacing:-0.549px;color:#1e2230;white-space:pre;-webkit-text-stroke:0.64px #1e2230">Reset</div>
<div style="position:absolute;left:2484.71px;top:1256.00px;font:normal 25.91px/29.8px 'Liberation Sans', sans-serif;letter-spacing:1.465px;color:#fff;white-space:pre;-webkit-text-stroke:0.62px #fff">Save template</div>
<div style="position:absolute;left:340.7px;top:462.8px;width:22px;height:22px"><svg width="22" height="22" viewBox="0 0 22 22"><g fill="#9896ae"><path d="M0.4 21.7 L2.4 15.4 L12.7 5.2 L16.8 9.3 L6.6 19.6 Z"/><path d="M13.8 3.8 L16.3 1.3 Q18 -0.3 19.7 1.3 L20.8 2.4 Q22.4 4.1 20.8 5.7 L18.2 8.2 Z"/></g></svg></div>
<div style="position:absolute;left:29px;top:408px;width:415px;height:313px;border-radius:10px;overflow:hidden;pointer-events:none"><div style="position:absolute;left:262.6px;top:13.399999999999999px;width:220px;height:58px;background:#6e7a8e;transform:rotate(45deg);display:flex;align-items:center;justify-content:center;color:#fff;font:bold 22.5px/1 'Liberation Sans', sans-serif;letter-spacing:0.4px"><span style="position:relative;top:0px;left:3px">Sample</span></div></div>
<div style="position:absolute;left:719.5px;top:462.8px;width:22px;height:22px"><svg width="22" height="22" viewBox="0 0 22 22"><g fill="#9896ae"><path d="M0.4 21.7 L2.4 15.4 L12.7 5.2 L16.8 9.3 L6.6 19.6 Z"/><path d="M13.8 3.8 L16.3 1.3 Q18 -0.3 19.7 1.3 L20.8 2.4 Q22.4 4.1 20.8 5.7 L18.2 8.2 Z"/></g></svg></div>
<div style="position:absolute;left:473.5px;top:408px;width:415px;height:313px;border-radius:10px;overflow:hidden;pointer-events:none"><div style="position:absolute;left:262.6px;top:13.399999999999999px;width:220px;height:58px;background:#6e7a8e;transform:rotate(45deg);display:flex;align-items:center;justify-content:center;color:#fff;font:bold 22.5px/1 'Liberation Sans', sans-serif;letter-spacing:0.4px"><span style="position:relative;top:0px;left:3px">Sample</span></div></div>
<div style="position:absolute;left:1288.0px;top:462.8px;width:22px;height:22px"><svg width="22" height="22" viewBox="0 0 22 22"><g fill="#9896ae"><path d="M0.4 21.7 L2.4 15.4 L12.7 5.2 L16.8 9.3 L6.6 19.6 Z"/><path d="M13.8 3.8 L16.3 1.3 Q18 -0.3 19.7 1.3 L20.8 2.4 Q22.4 4.1 20.8 5.7 L18.2 8.2 Z"/></g></svg></div>
<div style="position:absolute;left:918px;top:408px;width:415px;height:313px;border-radius:10px;overflow:hidden;pointer-events:none"><div style="position:absolute;left:262.6px;top:13.399999999999999px;width:220px;height:58px;background:#6e7a8e;transform:rotate(45deg);display:flex;align-items:center;justify-content:center;color:#fff;font:bold 22.5px/1 'Liberation Sans', sans-serif;letter-spacing:0.4px"><span style="position:relative;top:0px;left:3px">Sample</span></div></div>
<div style="position:absolute;left:1700.3px;top:462.8px;width:22px;height:22px"><svg width="22" height="22" viewBox="0 0 22 22"><g fill="#9896ae"><path d="M0.4 21.7 L2.4 15.4 L12.7 5.2 L16.8 9.3 L6.6 19.6 Z"/><path d="M13.8 3.8 L16.3 1.3 Q18 -0.3 19.7 1.3 L20.8 2.4 Q22.4 4.1 20.8 5.7 L18.2 8.2 Z"/></g></svg></div>
<div style="position:absolute;left:1362px;top:408px;width:415px;height:313px;border-radius:10px;overflow:hidden;pointer-events:none"><div style="position:absolute;left:262.6px;top:13.399999999999999px;width:220px;height:58px;background:#6e7a8e;transform:rotate(45deg);display:flex;align-items:center;justify-content:center;color:#fff;font:bold 22.5px/1 'Liberation Sans', sans-serif;letter-spacing:0.4px"><span style="position:relative;top:0px;left:3px">Sample</span></div></div>
<div style="position:absolute;left:2164.0px;top:462.8px;width:22px;height:22px"><svg width="22" height="22" viewBox="0 0 22 22"><g fill="#9896ae"><path d="M0.4 21.7 L2.4 15.4 L12.7 5.2 L16.8 9.3 L6.6 19.6 Z"/><path d="M13.8 3.8 L16.3 1.3 Q18 -0.3 19.7 1.3 L20.8 2.4 Q22.4 4.1 20.8 5.7 L18.2 8.2 Z"/></g></svg></div>
<div style="position:absolute;left:1806px;top:408px;width:415px;height:313px;border-radius:10px;overflow:hidden;pointer-events:none"><div style="position:absolute;left:262.6px;top:13.399999999999999px;width:220px;height:58px;background:#6e7a8e;transform:rotate(45deg);display:flex;align-items:center;justify-content:center;color:#fff;font:bold 22.5px/1 'Liberation Sans', sans-serif;letter-spacing:0.4px"><span style="position:relative;top:0px;left:3px">Sample</span></div></div>
<div style="position:absolute;left:2194px;top:398px;width:34px;height:34px;border-radius:50%;background:#fff"></div>
<svg style="position:absolute;left:2199px;top:406.5px" width="24" height="17" viewBox="0 0 24 17"><path d="M12 0.6C6.6 0.6 2.2 4 0.3 8.5 2.2 13 6.6 16.4 12 16.4S21.8 13 23.7 8.5C21.8 4 17.4 0.6 12 0.6Z" fill="#8e8ea2"/><circle cx="12" cy="8.5" r="5.3" fill="#fff"/><circle cx="12" cy="8.5" r="3.1" fill="#8e8ea2"/></svg>
<div style="position:absolute;left:29px;top:750px;width:2192px;height:600px;border-radius:10px;overflow:hidden"><div style="position:absolute;left:2039.6px;top:13.399999999999999px;width:220px;height:58px;background:#6e7a8e;transform:rotate(45deg);display:flex;align-items:center;justify-content:center;color:#fff;font:bold 22.5px/1 'Liberation Sans', sans-serif;letter-spacing:0.4px"><span style="position:relative;top:0px;left:3px">Sample</span></div></div>
<div style="position:absolute;left:2195px;top:740px;width:34px;height:34px;border-radius:50%;background:#fff"></div>
<svg style="position:absolute;left:2200px;top:748.5px" width="24" height="17" viewBox="0 0 24 17"><path d="M12 0.6C6.6 0.6 2.2 4 0.3 8.5 2.2 13 6.6 16.4 12 16.4S21.8 13 23.7 8.5C21.8 4 17.4 0.6 12 0.6Z" fill="#8e8ea2"/><circle cx="12" cy="8.5" r="5.3" fill="#fff"/><circle cx="12" cy="8.5" r="3.1" fill="#8e8ea2"/></svg>
<div style="position:absolute;left:2245px;top:80px;width:451.6px;height:936.5px;box-sizing:border-box;border:16px solid #3452fd;border-radius:9px"></div>
<svg style="position:absolute;left:1800px;top:40px" width="460" height="90" viewBox="1800 40 460 90"><path d="M1818.7 83.4 L2184 69.5 L2182.2 55.5 Q2182 52.5 2185 54 L2239.5 83.4 L2185 112 Q2182 113.5 2182.2 110.5 L2184 98 L1818.7 88.7 Q1816 86 1818.7 83.4 Z" fill="#3452fd" stroke="#3452fd" stroke-width="1.2" stroke-linejoin="round"/></svg>
</body></html>
